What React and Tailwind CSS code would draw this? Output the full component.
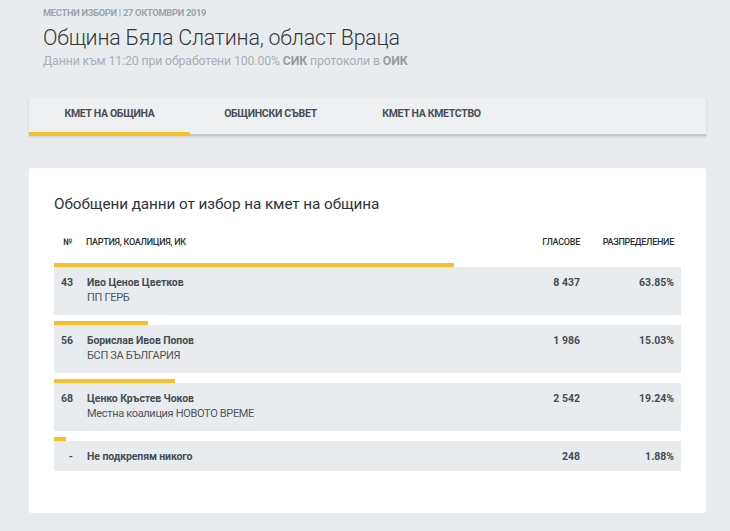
import React from "react";

const rows = [
  { no: "43", name: "Иво Ценов Цветков", party: "ПП ГЕРБ", votes: "8 437", pct: "63.85%", w: 63.85 },
  { no: "56", name: "Борислав Ивов Попов", party: "БСП ЗА БЪЛГАРИЯ", votes: "1 986", pct: "15.03%", w: 15.03 },
  { no: "68", name: "Ценко Кръстев Чоков", party: "Местна коалиция НОВОТО ВРЕМЕ", votes: "2 542", pct: "19.24%", w: 19.24 },
  { no: "-", name: "Не подкрепям никого", party: null, votes: "248", pct: "1.88%", w: 1.88 },
];

export default function App() {
  return (
    <div
      className="min-h-[531px] bg-[#e9ecef] pl-[29px] pr-[24px] pt-[7px] pb-[18px] text-[#454b52]"
      style={{ fontFamily: "Roboto, 'Noto Sans', sans-serif" }}
    >
      <div className="pl-[14px]">
        <div className="text-[9.3px] leading-[11px] font-bold tracking-[-0.03em] text-[#9ca2a8]">
          МЕСТНИ ИЗБОРИ | 27 ОКТОМВРИ 2019
        </div>
        <h1 className="mt-[7px] text-[21.4px] leading-[26px] font-light text-[#33383d] tracking-[-0.01em]">
          Община Бяла Слатина, област Враца
        </h1>
        <div className="mt-[2px] text-[12.3px] leading-[16px] text-[#a9aeb4] tracking-[-0.01em]">
          Данни към 11:20 при обработени 100.00% <span className="font-bold text-[#939aa0]">СИК</span> протоколи в{" "}
          <span className="font-bold text-[#939aa0]">ОИК</span>
        </div>
      </div>

      <div className="mt-[29px] flex bg-[#eef0f2] border-b-2 border-[#c2c6ca] shadow-[0_1px_2px_rgba(0,0,0,0.12)]">
        <div className="w-[161px] h-[38px] pb-[2px] -mb-[2px] border-b-4 border-[#f8c12c] flex items-center justify-center text-[10.5px] font-bold tracking-[-0.03em] text-[#474d54]">
          КМЕТ НА ОБЩИНА
        </div>
        <div className="w-[161px] h-[38px] pb-[2px] -mb-[2px] border-b-4 border-transparent flex items-center justify-center text-[10.5px] font-bold tracking-[-0.03em] text-[#474d54]">
          ОБЩИНСКИ СЪВЕТ
        </div>
        <div className="w-[161px] h-[38px] pb-[2px] -mb-[2px] border-b-4 border-transparent flex items-center justify-center text-[10.5px] font-bold tracking-[-0.03em] text-[#474d54]">
          КМЕТ НА КМЕТСТВО
        </div>
      </div>

      <div className="mt-[32px] bg-white rounded-[3px] px-[25px] pt-[26px] pb-[43px] h-[345px]">
        <h2 className="text-[15.3px] leading-[20px] text-[#2f3439] tracking-[-0.005em]">
          Обобщени данни от избор на кмет на община
        </h2>
        <div className="mt-[22px] flex items-center text-[9px] leading-[12px] font-medium tracking-[-0.03em] text-[#2c3035]">
          <div className="w-[18px] text-right">№</div>
          <div className="ml-[14px] flex-1">ПАРТИЯ, КОАЛИЦИЯ, ИК</div>
          <div className="w-[80px] text-right">ГЛАСОВЕ</div>
          <div className="w-[101px] text-right pr-[7px]">РАЗПРЕДЕЛЕНИЕ</div>
        </div>
        <div className="mt-[15px] flex flex-col gap-[6px]">
          {rows.map((r) => (
            <div key={r.no}>
              <div className="h-[4px] bg-[#f8c12c]" style={{ width: `${r.w}%` }} />
              <div
                className={`flex bg-[#e9ecef] pt-[8px] ${r.party ? "pb-[10px]" : "pb-[7px]"} text-[10.5px] leading-[15px] text-[#464c53]`}
              >
                <div className="w-[19px] text-right font-bold">{r.no}</div>
                <div className="ml-[14px] flex-1">
                  <div className="font-bold tracking-[-0.01em]">{r.name}</div>
                  {r.party && <div className="text-[11px] tracking-[-0.03em] text-[#4e545b]">{r.party}</div>}
                </div>
                <div className="w-[80px] text-right font-bold">{r.votes}</div>
                <div className="w-[101px] text-right font-bold pr-[7px]">{r.pct}</div>
              </div>
            </div>
          ))}
        </div>
      </div>
    </div>
  );
}
